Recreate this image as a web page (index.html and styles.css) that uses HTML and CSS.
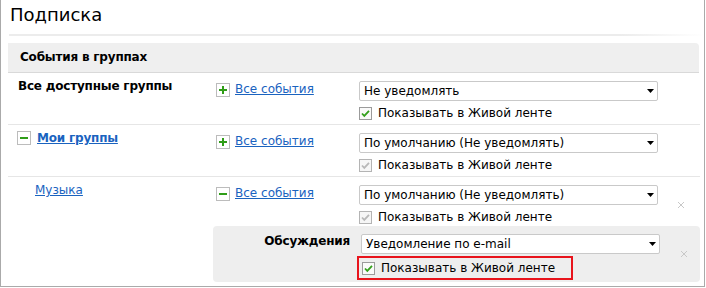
FILE: index.html
```html
<!DOCTYPE html>
<html lang="ru">
<head>
    <meta charset="UTF-8">
    <title>Подписка</title>
    <link rel="stylesheet" href="styles.css">
</head>
<body>

    <div class="page">
        <h1 class="title">Подписка</h1>
        <div class="title-rule"></div>

        <div class="section">
            <div class="section-head">События в группах</div>

            <!-- All groups -->
            <div class="row">
                <div class="col-name"><span class="name">Все доступные группы</span></div>
                <div class="col-events">
                    <svg class="toggle" width="14" height="14"><rect x=".5" y=".5" width="13" height="13" fill="#fff" stroke="#bcbcbc"/><path d="M3 7h8M7 3v8" stroke="#2f9d18" stroke-width="2"/></svg>
                    <a href="#">Все события</a>
                </div>
                <div class="col-settings">
                    <div class="select">Не уведомлять<svg class="arrow" width="7" height="4"><path d="M0 0h7L3.5 4z"/></svg></div>
                    <label class="check">
                        <svg class="box" width="13" height="13"><rect x=".5" y=".5" width="12" height="12" fill="#fafafa" stroke="#9b9b9b"/><path d="M3 6.5l2.3 2.4L10 3.8" fill="none" stroke="#34a01c" stroke-width="1.8"/></svg>
                        Показывать в Живой ленте
                    </label>
                </div>
                <div class="col-close"></div>
            </div>

            <!-- My groups -->
            <div class="row">
                <div class="col-name">
                    <svg class="toggle" width="14" height="14"><rect x=".5" y=".5" width="13" height="13" fill="#fff" stroke="#bcbcbc"/><path d="M3 7h8" stroke="#2f9d18" stroke-width="2"/></svg>
                    <a href="#" class="name">Мои группы</a>
                </div>
                <div class="col-events">
                    <svg class="toggle" width="14" height="14"><rect x=".5" y=".5" width="13" height="13" fill="#fff" stroke="#bcbcbc"/><path d="M3 7h8M7 3v8" stroke="#2f9d18" stroke-width="2"/></svg>
                    <a href="#">Все события</a>
                </div>
                <div class="col-settings">
                    <div class="select">По умолчанию (Не уведомлять)<svg class="arrow" width="7" height="4"><path d="M0 0h7L3.5 4z"/></svg></div>
                    <label class="check">
                        <svg class="box" width="13" height="13"><rect x=".5" y=".5" width="12" height="12" fill="#f6f6f6" stroke="#b4b4b4"/><path d="M3 6.5l2.3 2.4L10 3.8" fill="none" stroke="#b8b8b8" stroke-width="1.8"/></svg>
                        Показывать в Живой ленте
                    </label>
                </div>
                <div class="col-close"></div>
            </div>

            <!-- Music -->
            <div class="row last">
                <div class="col-name indent"><a href="#">Музыка</a></div>
                <div class="col-events">
                    <svg class="toggle" width="14" height="14"><rect x=".5" y=".5" width="13" height="13" fill="#fff" stroke="#bcbcbc"/><path d="M3 7h8" stroke="#2f9d18" stroke-width="2"/></svg>
                    <a href="#">Все события</a>
                </div>
                <div class="col-settings">
                    <div class="select">По умолчанию (Не уведомлять)<svg class="arrow" width="7" height="4"><path d="M0 0h7L3.5 4z"/></svg></div>
                    <label class="check">
                        <svg class="box" width="13" height="13"><rect x=".5" y=".5" width="12" height="12" fill="#f6f6f6" stroke="#b4b4b4"/><path d="M3 6.5l2.3 2.4L10 3.8" fill="none" stroke="#b8b8b8" stroke-width="1.8"/></svg>
                        Показывать в Живой ленте
                    </label>
                </div>
                <div class="col-close"><svg width="6" height="6"><path d="M0 0l6 6M6 0L0 6" stroke="#c8c8c8"/></svg></div>
            </div>

            <!-- Discussions -->
            <div class="sub">
                <div class="sub-name">Обсуждения</div>
                <div class="col-settings">
                    <div class="select">Уведомление по e-mail<svg class="arrow" width="7" height="4"><path d="M0 0h7L3.5 4z"/></svg></div>
                    <label class="check marked">
                        <svg class="box" width="13" height="13"><rect x=".5" y=".5" width="12" height="12" fill="#fafafa" stroke="#9b9b9b"/><path d="M3 6.5l2.3 2.4L10 3.8" fill="none" stroke="#34a01c" stroke-width="1.8"/></svg>
                        Показывать в Живой ленте
                    </label>
                </div>
                <div class="col-close"><svg width="6" height="6"><path d="M0 0l6 6M6 0L0 6" stroke="#c8c8c8"/></svg></div>
            </div>
        </div>
    </div>

</body>
</html>
```

FILE: styles.css
```css
/* General */
body {
    margin: 0;
    font-family: 'DejaVu Sans', sans-serif;
    font-size: 12px;
    color: #000;
    background: #fff;
}

a {
    color: #1a63bf;
}

.page {
    width: 703px;
    height: 280px;
    border: 1px solid #aaa;
    border-top: none;
    padding-bottom: 6px;
}

/* Title */
.title {
    margin: 0;
    padding: 3px 0 0 9px;
    height: 31px;
    font-size: 18px;
    font-weight: normal;
    line-height: 24px;
}

.title-rule {
    height: 2px;
    margin-left: 8px;
    background: linear-gradient(to right, #ececec 88%, #fff);
}

/* Section */
.section {
    width: 692px;
    margin: 7px 0 0 7px;
}

.section-head {
    height: 29px;
    line-height: 29px;
    padding-left: 12px;
    margin-right: 1px;
    background: #efefef;
    border-bottom: 1px solid #d9d9d9;
    border-top-right-radius: 4px;
    font-weight: bold;
    letter-spacing: -0.2px;
}

.row {
    display: grid;
    grid-template-columns: 208px 143px 299px auto;
    padding: 8px 0 4px;
    border-bottom: 1px solid #e6e6e6;
}

.row.last {
    padding-bottom: 2px;
    border-bottom: none;
}

.col-name {
    display: flex;
    align-items: center;
    align-self: start;
    gap: 5px;
    margin-top: -3px;
    padding-left: 9px;
    line-height: 16px;
}

.col-name.indent {
    padding-left: 27px;
}

.name {
    font-weight: bold;
    letter-spacing: -0.2px;
    padding-left: 1px;
}

.col-events {
    display: flex;
    align-items: center;
    align-self: start;
    gap: 5px;
    line-height: 16px;
}

.col-events .toggle {
    margin-top: 2px;
}

.toggle {
    flex: none;
    display: block;
}

/* Select and checkbox */
.col-settings {
    display: flex;
    flex-direction: column;
    align-items: flex-start;
    gap: 6px;
}

.select {
    box-sizing: border-box;
    width: 299px;
    height: 20px;
    line-height: 18px;
    padding: 0 4px;
    border: 1px solid #c9c9c9;
    border-radius: 2px;
    background: #fff;
    display: flex;
    justify-content: space-between;
    align-items: center;
}

.arrow {
    margin-right: -1px;
}

.check {
    display: flex;
    align-items: center;
    gap: 6px;
    line-height: 13px;
}

.box {
    flex: none;
    display: block;
}

.check.marked {
    margin: -3px 0 0 -4px;
    padding: 3px 16px 2px 3px;
    border: 2px solid #e8141c;
    line-height: 15px;
}

.col-close {
    display: flex;
    align-items: center;
    padding-left: 20px;
}

/* Discussions panel */
.sub {
    display: grid;
    grid-template-columns: 137px 299px auto;
    column-gap: 11px;
    margin-left: 205px;
    padding: 8px 0 2px;
    background: #eee;
    border-radius: 4px;
}

.sub-name {
    text-align: right;
    font-weight: bold;
    letter-spacing: -0.2px;
    line-height: 16px;
    margin-top: -1px;
}

.sub .col-settings {
    gap: 5px;
}

.sub .col-close {
    padding-left: 10px;
    padding-bottom: 6px;
}
```
